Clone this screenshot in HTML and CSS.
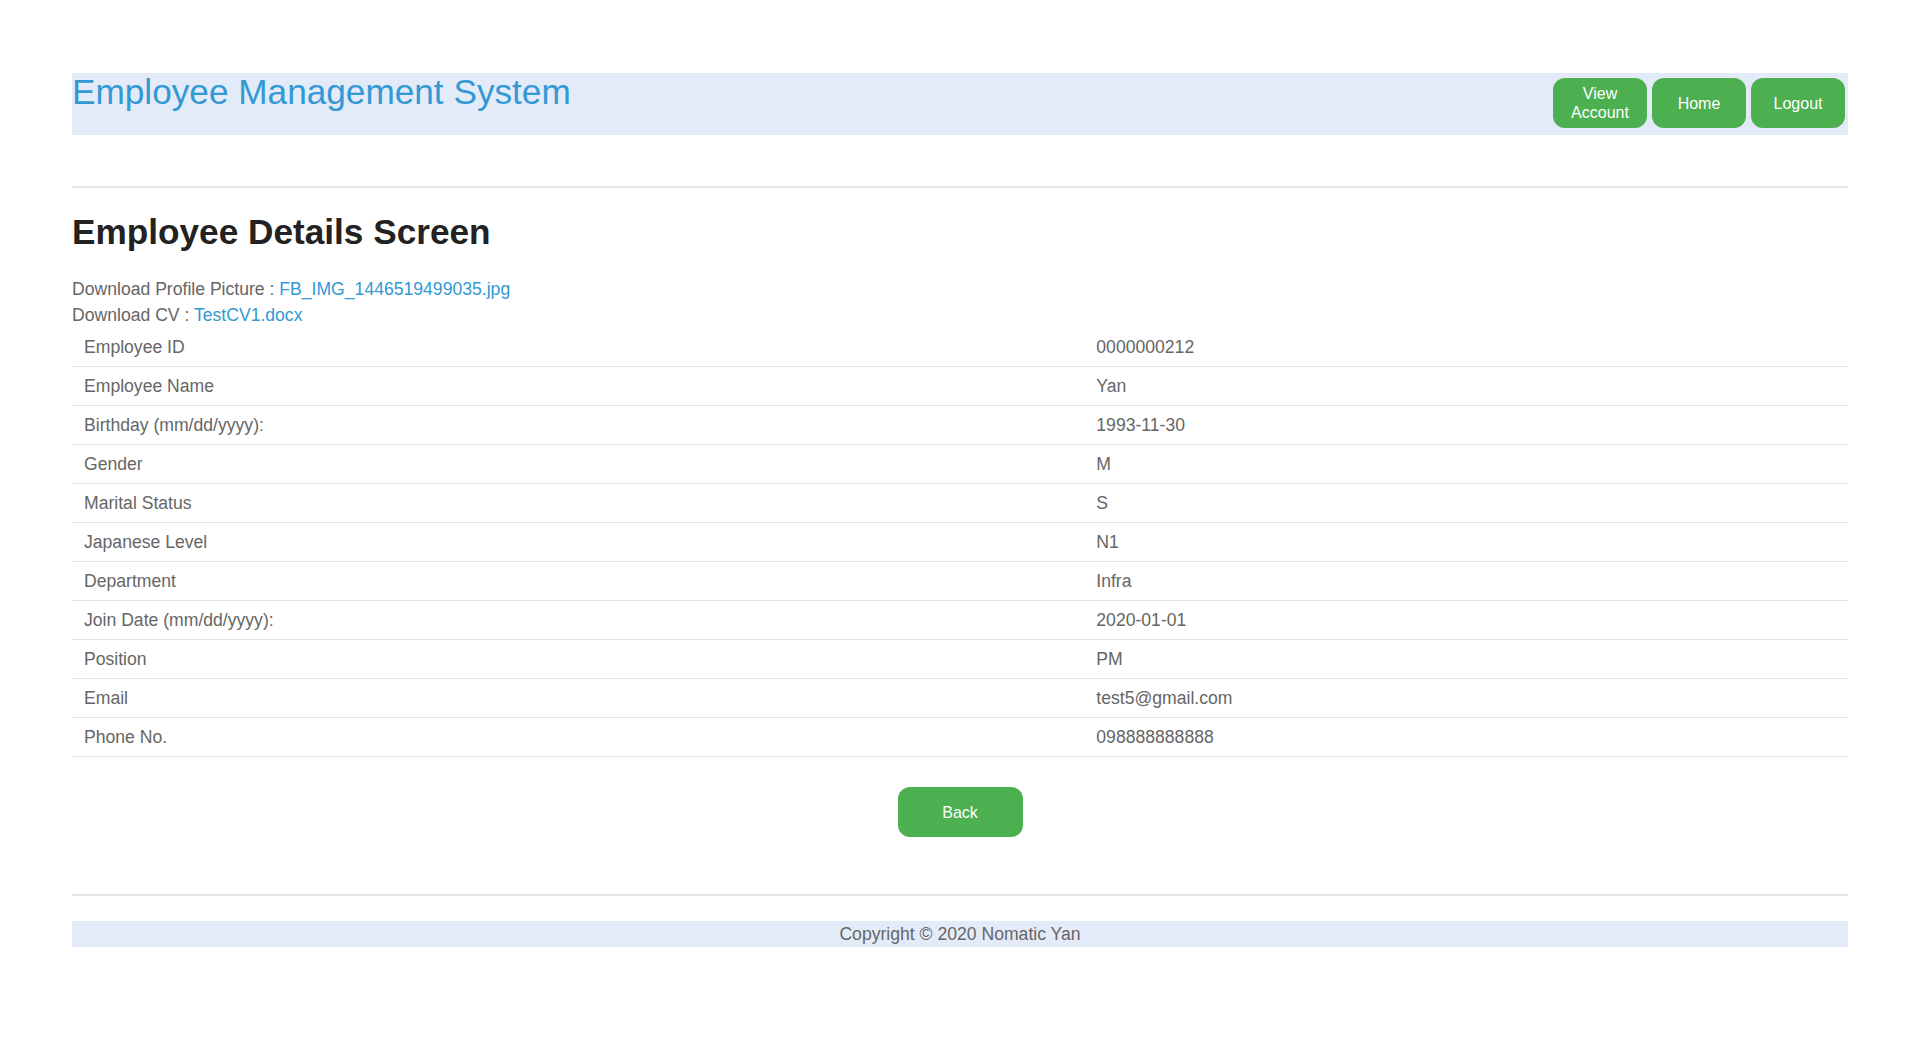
FILE: index.html
```html
<!DOCTYPE html>
<html lang="en">
<head>
<meta charset="utf-8">
<title>Employee Details Screen</title>
<link rel="stylesheet" href="styles.css">
</head>
<body>
<div class="page">
  <header class="topbar">
    <div class="brand">Employee Management System</div>
    <nav class="nav">
      <button class="btn nav-btn">View Account</button>
      <button class="btn nav-btn">Home</button>
      <button class="btn nav-btn">Logout</button>
    </nav>
  </header>
  <hr class="rule rule-top">
  <main class="content">
    <h1 class="title">Employee Details Screen</h1>
    <div class="download">Download Profile Picture : <a class="link" href="#">FB_IMG_1446519499035.jpg</a></div>
    <div class="download">Download CV : <a class="link" href="#">TestCV1.docx</a></div>
    <table class="details">
      <colgroup><col class="col-label"><col class="col-value"></colgroup>
      <tbody>
        <tr><td>Employee ID</td><td>0000000212</td></tr>
        <tr><td>Employee Name</td><td>Yan</td></tr>
        <tr><td>Birthday (mm/dd/yyyy):</td><td>1993-11-30</td></tr>
        <tr><td>Gender</td><td>M</td></tr>
        <tr><td>Marital Status</td><td>S</td></tr>
        <tr><td>Japanese Level</td><td>N1</td></tr>
        <tr><td>Department</td><td>Infra</td></tr>
        <tr><td>Join Date (mm/dd/yyyy):</td><td>2020-01-01</td></tr>
        <tr><td>Position</td><td>PM</td></tr>
        <tr><td>Email</td><td>test5@gmail.com</td></tr>
        <tr><td>Phone No.</td><td>098888888888</td></tr>
      </tbody>
    </table>
    <div class="actions">
      <button class="btn back-btn">Back</button>
    </div>
  </main>
  <hr class="rule rule-bottom">
  <footer class="footer">Copyright © 2020 Nomatic Yan</footer>
</div>
</body>
</html>
```
FILE: styles.css
```css
html, body {
  margin: 0;
  padding: 0;
  background: #ffffff;
}
body {
  font-family: "Liberation Sans", Arial, sans-serif;
  font-size: 17.6px;
  color: #666666;
}
.page {
  width: 1776px;
  margin: 0 auto;
  padding-top: 73px;
}
.topbar {
  display: flex;
  justify-content: space-between;
  align-items: flex-start;
  height: 62px;
  background: #e3ebf8;
}
.brand {
  font-size: 35.2px;
  line-height: 38px;
  color: #3399d4;
}
.nav {
  display: flex;
  gap: 5px;
  margin-top: 5px;
  margin-right: 3px;
}
.btn {
  font-family: "Liberation Sans", Arial, sans-serif;
  font-size: 16px;
  line-height: 19px;
  color: #ffffff;
  background: #4caf50;
  border: none;
  border-radius: 12px;
  padding: 0 8px;
  height: 50px;
  cursor: pointer;
}
.nav-btn {
  width: 94px;
}
.rule {
  border: none;
  height: 2px;
  margin: 0;
  background: #e6e6e6;
}
.rule-top {
  margin-top: 51px;
}
.title {
  margin: 25px 0 26px;
  font-size: 35.2px;
  line-height: 37px;
  font-weight: bold;
  color: #222222;
}
.download {
  line-height: 26px;
}
.link {
  color: #3399d4;
  text-decoration: none;
}
.details {
  width: 100%;
  border-collapse: collapse;
  table-layout: fixed;
}
.col-label {
  width: 57%;
}
.details td {
  padding: 7px 12px;
  line-height: 24px;
  border-bottom: 1px solid #e2e2e2;
}
.actions {
  display: flex;
  justify-content: center;
  margin-top: 30px;
}
.back-btn {
  width: 125px;
}
.rule-bottom {
  margin-top: 57px;
}
.footer {
  margin-top: 25px;
  background: #e3ebf8;
  text-align: center;
  line-height: 26px;
}
```
